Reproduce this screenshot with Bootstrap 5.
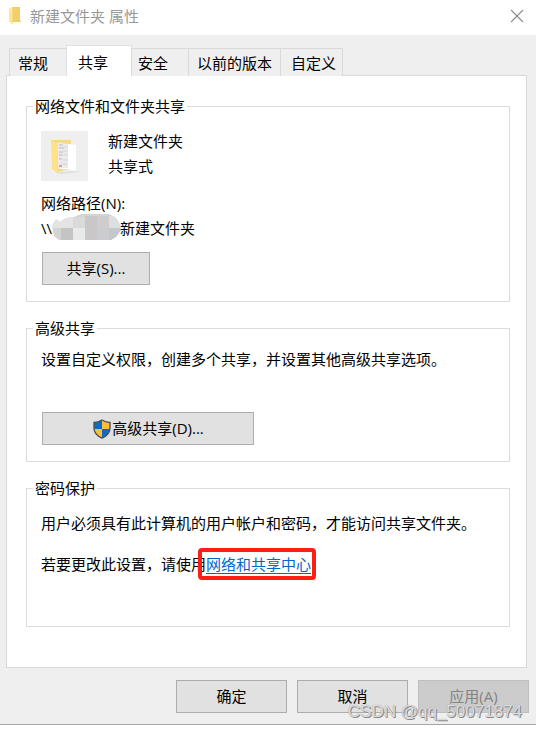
<!DOCTYPE html>
<html lang="zh-CN">
<head>
<meta charset="utf-8">
<meta name="viewport" content="width=device-width, initial-scale=1">
<title>新建文件夹 属性</title>
<link href="https://cdn.jsdelivr.net/npm/bootstrap@5.3.0/dist/css/bootstrap.min.css" rel="stylesheet">
<style>
  body { font: 15px/25px "Open Sans", "Noto Sans CJK SC", sans-serif; color: #000; background: #fff; }
  .dialog { background: #efefef; border-bottom: 1px solid #a5a5a5; }
  .titlebar { height: 35px; background: #fff; color: #999; padding: 0 12px 3px 8px; }
  .title-text { font-size: 15px; font-weight: 400; line-height: 25px; }
  .close-x { line-height: 0; color: #8a8a8a; }
  .tab-strip { border: 0; padding: 10px 9px 0; margin-bottom: -1px; }
  .tab-strip .nav-link { height: 28px; margin: 0 0 0 -1px; padding: 2px 8px 0; line-height: 25px; color: #000; background: #efefef; border: 1px solid #d9d9d9; border-bottom: 0; border-radius: 0; }
  .tab-strip .nav-item:first-child .nav-link { margin-left: 0; padding-right: 18px; }
  .tab-strip .nav-link.active { height: 31px; padding: 2px 23px 0 11px; background: #fff; color: #000; }
  .tab-strip .tab-security { padding-left: 6px; padding-right: 20px; }
  .tab-strip .tab-custom { padding-left: 10px; padding-right: 6px; }
  .sheet { background: #fff; border: 1px solid #d9d9d9; margin: 0 9px 0 6px; padding: 20px 16px 40px 19px; gap: 16px; }
  .group { border: 1px solid #dcdcdc; padding: 13px 14px 16px; }
  .group legend { float: none; width: auto; font-size: 15px; line-height: 20px; margin: 0 0 0 -8px; padding: 0 2px; }
  .group-advanced { padding-top: 9px; }
  .group-password { padding-bottom: 49px; }
  .folder-tile { margin-top: 2px; background: #efefef; }
  .facts { margin-left: 20px; }
  .path-label { margin-top: 10px; }
  .path-row { height: 25px; }
  .path-mask { margin: -3px -1px 0 -3px; }
  .win-btn { height: 33px; min-width: 111px; padding: 0 12px; font-size: 15px; line-height: 25px; color: #000; background: #e1e1e1; border: 1px solid #adadad; border-radius: 0; }
  .win-btn:disabled { color: #838383; background: #ccc; border-color: #bfbfbf; opacity: 1; }
  .btn-share { min-width: 108px; margin: 11px 0 0 1px; }
  .btn-advanced { min-width: 212px; margin: 40px 0 0 1px; }
  .center-link { color: #0066cc; text-underline-offset: 3px; text-decoration-thickness: 1px; }
  .center-link::after { content: ""; position: absolute; inset: -6px -5px -6px -8px; border: 4px solid #ff1f12; border-radius: 4px; pointer-events: none; }
  .actions { padding: 12px 7px 11px; gap: 10px; }
  .stamp { position: absolute; right: 14px; bottom: 0; font: 17px/24px "Liberation Sans", sans-serif; color: #dcdcdc; text-shadow: 1px 1px 0 #888, 0 0 1px #999; pointer-events: none; }
</style>
<script src="https://cdn.jsdelivr.net/npm/bootstrap@5.3.0/dist/js/bootstrap.bundle.min.js"></script>
</head>
<body>
<main class="dialog">
  <header class="titlebar d-flex align-items-center">
    <svg width="14" height="18" viewBox="0 0 14 18" aria-hidden="true"><path d="M4 0h8v13l1 1v1H4z" fill="#f3cf6b"/><path d="M1 0l4 3v14l-4-2z" fill="#ffe498"/><path d="M4 3l1 0v14l-1-1z" fill="#f8d980"/></svg>
    <h1 class="title-text mb-0 ms-2">新建文件夹 属性</h1>
    <button type="button" class="close-x btn p-0 border-0 ms-auto" aria-label="关闭"><svg width="14" height="14" viewBox="0 0 14 14" fill="none" stroke="currentColor" stroke-width="1.1"><path d="M1 1l12 12M13 1L1 13"/></svg></button>
  </header>

  <ul class="tab-strip nav nav-tabs align-items-end" role="tablist">
    <li class="nav-item" role="presentation"><button class="nav-link" type="button" role="tab">常规</button></li>
    <li class="nav-item" role="presentation"><button class="nav-link active" type="button" role="tab" aria-selected="true">共享</button></li>
    <li class="nav-item" role="presentation"><button class="nav-link tab-security" type="button" role="tab">安全</button></li>
    <li class="nav-item" role="presentation"><button class="nav-link" type="button" role="tab">以前的版本</button></li>
    <li class="nav-item" role="presentation"><button class="nav-link tab-custom" type="button" role="tab">自定义</button></li>
  </ul>

  <section class="sheet d-flex flex-column">
    <fieldset class="group">
      <legend>网络文件和文件夹共享</legend>
      <div class="d-flex align-items-start">
        <svg class="folder-tile" width="47" height="50" viewBox="0 0 47 50" aria-hidden="true">
          <path d="M17 41l20-1 1 1-18 2z" fill="#ddd"/>
          <path d="M10 9h20v28l-13 4z" fill="#f7d983"/>
          <path d="M16 11l11 2v24H16z" fill="#eceaec"/>
          <path d="M18 14h4M18 17h5M18 21h4M18 24h4M18 28h3" stroke="#b9bcc3"/>
          <path d="M23 16h4M22 20h5M23 24h4M22 29h5M20 33h6" stroke="#d3d3d6"/>
          <path d="M18 35h3" stroke="#ed9c95" stroke-width="2"/>
          <path d="M27 13l8 1v26l-8-2H18v-1h9z" fill="#fff"/>
          <path d="M10 9l7 4v30l-6-5z" fill="#ffe18c"/>
        </svg>
        <div class="facts"><div>新建文件夹</div><div>共享式</div></div>
      </div>
      <div class="path-label">网络路径(N):</div>
      <div class="path-row d-flex align-items-center">
        <span>\\</span>
        <svg class="path-mask" width="72" height="26" viewBox="0 0 72 26" aria-hidden="true">
          <defs><clipPath id="blob"><path d="M3 12L7 5l4 3 6-4 8-1 7-3h28l6 3 4 5 2 8-5 7-5 3H10l-5-4z"/></clipPath></defs>
          <g clip-path="url(#blob)">
            <path d="M0 0h72v26H0z" fill="#d4d4d4"/>
            <path d="M0 0h24v14H0z" fill="#e4e4e4"/><path d="M24 3h12v11H24z" fill="#d9dadb"/>
            <path d="M36 2h12v24H36z" fill="#c9c7c7"/><path d="M48 2h12v12H48z" fill="#d0cdcd"/>
            <path d="M60 2h12v12H60z" fill="#dce0e3"/><path d="M12 14h12v12H12z" fill="#c4c4c4"/>
            <path d="M24 14h12v12H24z" fill="#e8e9ea"/><path d="M48 14h12v12H48z" fill="#cbcccf"/><path d="M60 14h12v12H60z" fill="#c5c8cb"/>
          </g>
        </svg>
        <span>新建文件夹</span>
      </div>
      <button type="button" class="btn win-btn btn-share">共享(S)...</button>
    </fieldset>

    <fieldset class="group group-advanced">
      <legend>高级共享</legend>
      <p class="mb-0">设置自定义权限，创建多个共享，并设置其他高级共享选项。</p>
      <button type="button" class="btn win-btn btn-advanced d-inline-flex align-items-center justify-content-center">
        <svg width="20" height="20" viewBox="0 0 20 20" aria-hidden="true">
          <defs><clipPath id="shield"><path d="M10 1q4 2.500 8 2.500V9c0 5-3 8-8 10C5 17 2 14 2 9V3.500q4 0 8-2.500z"/></clipPath></defs>
          <g clip-path="url(#shield)"><path d="M0 0h10v10H0zM10 10h10v10H10z" fill="#0b6bcb"/><path d="M10 0h10v10H10zM0 10h10v10H0z" fill="#ffbe35"/></g>
          <path d="M10 1q4 2.500 8 2.500V9c0 5-3 8-8 10C5 17 2 14 2 9V3.500q4 0 8-2.500z" fill="none" stroke="#505459" stroke-width="1.400"/>
        </svg>
        <span>高级共享(D)...</span>
      </button>
    </fieldset>

    <fieldset class="group group-password">
      <legend>密码保护</legend>
      <p class="mb-3">用户必须具有此计算机的用户帐户和密码，才能访问共享文件夹。</p>
      <p class="mb-0">若要更改此设置，请使用<a href="#" class="center-link position-relative">网络和共享中心</a></p>
    </fieldset>
  </section>

  <footer class="actions d-flex justify-content-end position-relative">
    <button type="button" class="btn win-btn">确定</button>
    <button type="button" class="btn win-btn">取消</button>
    <button type="button" class="btn win-btn" disabled>应用(A)</button>
    <span class="stamp">CSDN @qq_50071874</span>
  </footer>
</main>
</body>
</html>
